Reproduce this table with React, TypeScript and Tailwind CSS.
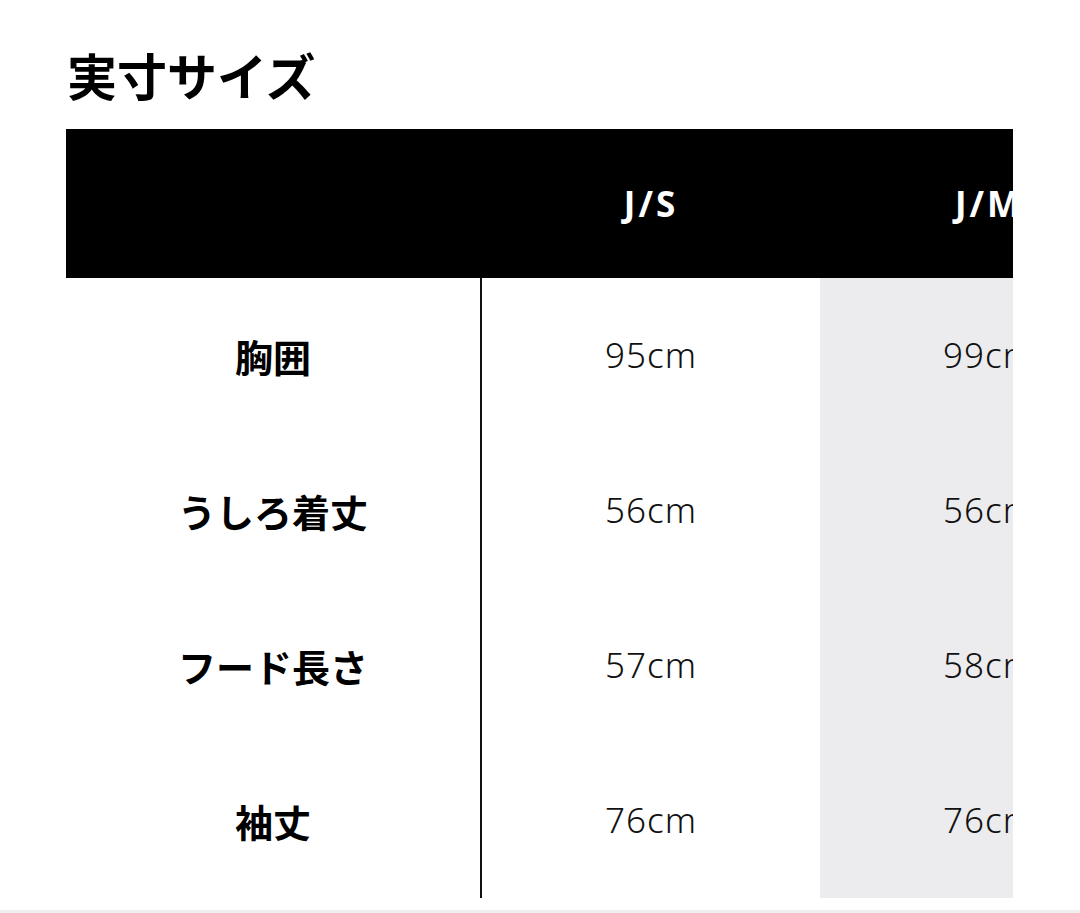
const sizes = ["J/S", "J/M", "J/L"];

const rows = [
  { label: "胸囲", values: ["95cm", "99cm", "103cm"] },
  { label: "うしろ着丈", values: ["56cm", "56cm", "58cm"] },
  { label: "フード長さ", values: ["57cm", "58cm", "59cm"] },
  { label: "袖丈", values: ["76cm", "76cm", "78cm"] },
];

const jp = { fontFamily: '"Noto Sans CJK JP", "Noto Sans", sans-serif' };
const num = { fontFamily: '"Noto Sans", "Noto Sans CJK JP", sans-serif' };

export default function App() {
  return (
    <div className="w-[1080px] h-[913px] bg-white relative overflow-hidden">
      <div className="pl-[66px] pt-[42px]">
        <h2 className="text-[50px] leading-[64px] font-bold text-black pl-[1px]" style={jp}>
          実寸サイズ
        </h2>

        <div className="mt-[23px] w-[947px] overflow-hidden">
          <div className="grid grid-cols-[416px_338px_338px_338px] w-max">
            {/* header */}
            <div className="h-[149px] bg-black" />
            {sizes.map((s) => (
              <div
                key={s}
                className="h-[149px] bg-black flex items-center justify-center text-white text-[35px] font-bold tracking-[3px] pt-[2px]"
                style={num}
              >
                {s}
              </div>
            ))}

            {/* body */}
            {rows.map((r) => (
              <div key={r.label} className="contents">
                <div
                  className="h-[155px] border-r-2 border-[#111] flex items-center justify-center text-[38px] font-bold text-black"
                  style={jp}
                >
                  {r.label}
                </div>
                {r.values.map((v, i) => (
                  <div
                    key={i}
                    className={`h-[155px] flex items-center justify-center text-[35px] font-light tracking-[1px] text-[#111] ${
                      i === 1 ? "bg-[#ececee]" : "bg-white"
                    }`}
                    style={num}
                  >
                    {v}
                  </div>
                ))}
              </div>
            ))}
          </div>
        </div>
      </div>
      <div className="absolute left-0 right-0 top-[910px] h-[3px] bg-[#efefef]" />
    </div>
  );
}
